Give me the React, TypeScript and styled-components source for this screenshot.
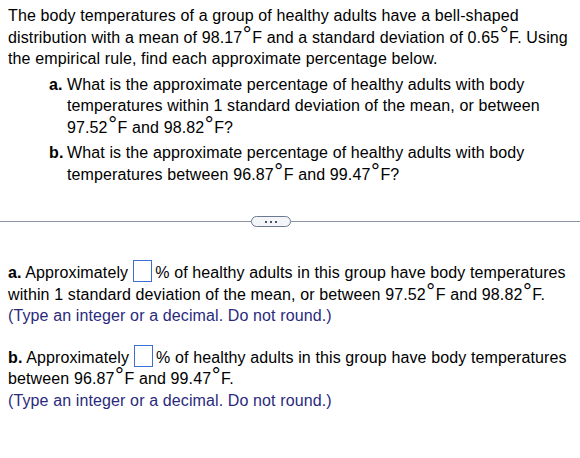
import React from "react";
import styled, { createGlobalStyle } from "styled-components";

const Global = createGlobalStyle`
  html, body { margin: 0; padding: 0; background: #ffffff; }
  body {
    font-family: "Liberation Sans", Arial, sans-serif;
    font-size: 16px;
    letter-spacing: 0.12px;
    color: #000000;
  }
`;

const Page = styled.div`
  width: 580px;
  display: flex;
  flex-direction: column;
`;

const Section = styled.div`
  padding: 5px 8px 0 8px;
`;

const Para = styled.p`
  margin: 0;
  line-height: 21.5px;
`;

const List = styled.div`
  display: flex;
  flex-direction: column;
  gap: 4px;
  margin-top: 4px;
  padding-left: 41px;
`;

const Item = styled.div`
  display: flex;
  line-height: 21.5px;
`;

const Label = styled.span`
  font-weight: bold;
  width: 18px;
  flex: none;
`;

const Deg = styled.span`
  display: inline-block;
  font-size: 22px;
  line-height: 0;
  transform: translateY(-1px);
  margin: 0 0.5px;
`;

const Divider = styled.div`
  display: flex;
  align-items: center;
  margin-top: 31px;
  height: 11px;
`;

const Rule = styled.div<{ $w?: number }>`
  ${(p) => (p.$w ? `width: ${p.$w}px; flex: none;` : `flex: 1;`)}
  height: 1px;
  background: #8a94a3;
`;

const MoreButton = styled.div`
  width: 38px;
  height: 9px;
  border: 1px solid #6b7a90;
  border-radius: 6px;
  background: #f3f5f8;
  display: flex;
  align-items: center;
  justify-content: center;
  gap: 3px;
`;

const Dot = styled.span`
  width: 2px;
  height: 2px;
  background: #4a5568;
`;

const Answer = styled.div<{ $mt: number }>`
  padding: 0 8px;
  margin-top: ${(p) => p.$mt}px;
  line-height: 21.5px;
`;

const Input = styled.span`
  display: inline-block;
  width: 17px;
  height: 20px;
  border: 1.5px solid #3a6fd0;
  vertical-align: -4px;
  margin: 0 3px 0 5px;
`;

const Hint = styled.div`
  color: #2a2a7c;
`;

const D = () => <Deg>°</Deg>;

export default function App() {
  return (
    <Page>
      <Global />
      <Section>
        <Para>
          The body temperatures of a group of healthy adults have a bell-shaped distribution with a
          mean of 98.17<D />F and a standard deviation of 0.65<D />F. Using the empirical rule, find
          each approximate percentage below.
        </Para>
        <List>
          <Item>
            <Label>a.</Label>
            <span>
              What is the approximate percentage of healthy adults with body temperatures within 1
              standard deviation of the mean, or between 97.52<D />F and 98.82<D />F?
            </span>
          </Item>
          <Item>
            <Label>b.</Label>
            <span>
              What is the approximate percentage of healthy adults with body temperatures between
              96.87<D />F and 99.47<D />F?
            </span>
          </Item>
        </List>
      </Section>
      <Divider>
        <Rule $w={251} />
        <MoreButton>
          <Dot />
          <Dot />
          <Dot />
        </MoreButton>
        <Rule />
      </Divider>
      <Answer $mt={33}>
        <div>
          <b>a.</b> Approximately<Input />% of healthy adults in this group have body temperatures
          within 1 standard deviation of the mean, or between 97.52<D />F and 98.82<D />F.
        </div>
        <Hint>(Type an integer or a decimal. Do not round.)</Hint>
      </Answer>
      <Answer $mt={18}>
        <div>
          <b>b.</b> Approximately<Input />% of healthy adults in this group have body temperatures
          between 96.87<D />F and 99.47<D />F.
        </div>
        <Hint>(Type an integer or a decimal. Do not round.)</Hint>
      </Answer>
    </Page>
  );
}
